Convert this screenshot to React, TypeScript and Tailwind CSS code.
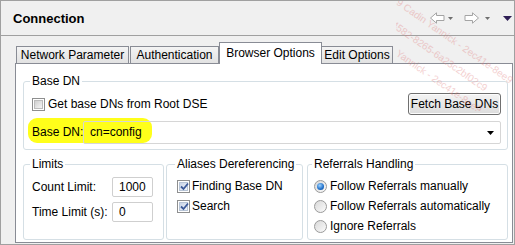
import React from 'react';

const Checkbox: React.FC<{ checked?: boolean }> = ({ checked }) => (
  <span className="relative w-[13px] h-[13px] shrink-0 border border-[#8e8f8f] bg-white p-[1px]">
    <span
      className={
        checked
          ? 'block w-full h-full border border-[#b7c4d6] bg-gradient-to-br from-[#c7d2e6] to-[#f4f6fa]'
          : 'block w-full h-full border border-[#bcbcbc] bg-gradient-to-br from-[#cfcfcf] to-[#f6f6f6]'
      }
    />
    {checked && (
      <svg className="absolute left-[2px] top-[1px]" width="9" height="9" viewBox="0 0 9 9">
        <path d="M1 4.5 L3.5 7 L8 1.5" fill="none" stroke="#3c5a99" strokeWidth="1.8" />
      </svg>
    )}
  </span>
);

const Radio: React.FC<{ checked?: boolean }> = ({ checked }) => (
  <span className="relative w-[13px] h-[13px] shrink-0 rounded-full border border-[#9a9a9a] bg-gradient-to-br from-[#d8d8d8] to-[#fbfbfb] flex items-center justify-center">
    {checked && (
      <span className="w-[7px] h-[7px] rounded-full bg-[radial-gradient(circle_at_40%_35%,#9fd3ff,#1f6fc9_60%,#164a8c)]" />
    )}
  </span>
);

const Group: React.FC<{ title: string; className?: string; children: React.ReactNode }> = ({
  title,
  className,
  children,
}) => (
  <fieldset className={`border border-[#d5dfe5] rounded-[3px] min-w-0 ${className ?? ''}`}>
    <legend className="-ml-[2px] px-[2px] leading-[15px]">{title}</legend>
    {children}
  </fieldset>
);

const Triangle: React.FC<{ color: string; w?: number }> = ({ color, w = 5 }) => (
  <svg width={w} height={w / 2 + 0.5} viewBox={`0 0 ${w} ${w / 2 + 0.5}`}>
    <polygon points={`0,0 ${w},0 ${w / 2},${w / 2 + 0.5}`} fill={color} />
  </svg>
);

const Arrow: React.FC<{ flip?: boolean }> = ({ flip }) => (
  <svg width="15" height="12" viewBox="0 0 15 12" className={flip ? '-scale-x-100' : ''}>
    <polygon
      points="0.5,6 6.5,0.8 6.5,3.5 14,3.5 14,8.5 6.5,8.5 6.5,11.2"
      fill="#ffffff"
      stroke="#a4a4a4"
      strokeWidth="1"
    />
  </svg>
);

const watermark = [
  '9 Cadin Yannick - 2ec41e-8ee9',
  'a-4582-8265-6a23c2bf02c9',
  'Cadin Yannick - 2ec41e-8ee9',
];

export default function App() {
  return (
    <div className="relative w-[515px] h-[245px] overflow-hidden flex flex-col border border-[#a0a0a0] bg-[#f0f0f0] text-[12px] leading-[15px] text-black font-['Liberation_Sans',Arial,sans-serif]">
      <div className="h-[35px] shrink-0 border-b border-[#a0a0a0] flex items-center pl-[12px] pr-[2px]">
        <span className="text-[13px] font-bold">Connection</span>
        <div className="ml-auto flex items-center">
          <Arrow />
          <span className="ml-[3px]"><Triangle color="#6f6f6f" /></span>
          <span className="ml-[11px]"><Arrow flip /></span>
          <span className="ml-[6px]"><Triangle color="#6f6f6f" /></span>
          <span className="ml-[13px]"><Triangle color="#2f1f55" w={9} /></span>
        </div>
      </div>

      <div className="flex-1 flex flex-col pt-[6px]">
        <div className="relative z-10 -mb-px ml-[15px] flex items-end">
          <div className="w-[113px] h-[17px] mb-px border border-b-0 border-[#898c95] bg-gradient-to-b from-[#f4f4f4] to-[#e2e2e2] flex items-center justify-center pt-[1px]">
            Network Parameter
          </div>
          <div className="ml-[1px] w-[89px] h-[17px] mb-px border border-b-0 border-[#898c95] bg-gradient-to-b from-[#f4f4f4] to-[#e2e2e2] flex items-center justify-center pt-[1px]">
            Authentication
          </div>
          <div className="w-[103px] h-[22px] border border-b-0 border-[#898c95] bg-white flex items-start justify-center pt-[3px]">
            Browser Options
          </div>
          <div className="w-[71px] h-[17px] mb-px border border-b-0 border-l-0 border-[#898c95] bg-gradient-to-b from-[#f4f4f4] to-[#e2e2e2] flex items-center justify-center pt-[1px]">
            Edit Options
          </div>
        </div>

        <div className="flex-1 ml-[14px] mr-[1px] mb-[1px] bg-white border border-[#898c95] pl-[7px] pr-[4px] pt-[10px] pb-[2px] flex flex-col">
          <Group title="Base DN" className="pl-[8px] pr-[6px] pt-[4px] pb-[5px]">
            <div className="h-[22px] flex items-center">
              <Checkbox />
              <span className="ml-[3px]">Get base DNs from Root DSE</span>
              <button className="ml-auto w-[93px] h-[22px] rounded-[3px] border border-[#707070] bg-gradient-to-b from-[#f4f4f4] to-[#dcdcdc] shadow-[inset_0_0_0_1px_#fcfcfc] whitespace-nowrap">
                Fetch Base DNs
              </button>
            </div>
            <div className="relative mt-[6px] h-[23px] flex items-center">
              <span className="absolute -left-[4px] -top-[3px] w-[124px] h-[25px] rounded-[9px] bg-[#ffff1a]" />
              <span className="relative w-[51px] shrink-0 whitespace-nowrap">Base DN:</span>
              <div className="relative flex-1 h-full rounded-[2px] border border-[#d6d6d6] flex items-center pl-[6px] pr-[6px]">
                <span className="relative">cn=config</span>
                <span className="ml-auto">
                  <Triangle color="#000000" w={7} />
                </span>
              </div>
            </div>
          </Group>

          <div className="mt-[7px] flex-1 flex">
            <Group title="Limits" className="w-[141px] pl-[8px] pt-[5px]">
              <div className="flex flex-col gap-[5px]">
                <div className="flex items-center">
                  <span className="w-[80px] shrink-0 whitespace-nowrap">Count Limit:</span>
                  <span className="w-[41px] h-[20px] rounded-[2px] border border-[#cfcfcf] pl-[6px] flex items-center">1000</span>
                </div>
                <div className="flex items-center">
                  <span className="w-[80px] shrink-0 whitespace-nowrap">Time Limit (s):</span>
                  <span className="w-[41px] h-[20px] rounded-[2px] border border-[#cfcfcf] pl-[6px] flex items-center">0</span>
                </div>
              </div>
            </Group>

            <Group title="Aliases Dereferencing" className="ml-[2px] w-[137px] pl-[10px] pt-[4px]">
              <div className="h-[20px] flex items-center">
                <Checkbox checked />
                <span className="ml-[2px]">Finding Base DN</span>
              </div>
              <div className="h-[20px] flex items-center">
                <Checkbox checked />
                <span className="ml-[2px]">Search</span>
              </div>
            </Group>

            <Group title="Referrals Handling" className="ml-[4px] flex-1 pl-[6px] pt-[4px]">
              <div className="h-[20px] flex items-center">
                <Radio checked />
                <span className="ml-[3px]">Follow Referrals manually</span>
              </div>
              <div className="h-[20.5px] flex items-center">
                <Radio />
                <span className="ml-[3px]">Follow Referrals automatically</span>
              </div>
              <div className="h-[20.5px] flex items-center">
                <Radio />
                <span className="ml-[3px]">Ignore Referrals</span>
              </div>
            </Group>
          </div>
        </div>
      </div>

      <div className="pointer-events-none absolute left-[395px] top-0 w-[120px] h-[110px] overflow-hidden">
        <div className="absolute left-[6px] -top-[6px] rotate-[35deg] origin-top-left flex flex-col gap-[6px] text-[10px] text-[#e07a7a] opacity-35 whitespace-nowrap">
          {watermark.map((line, i) => (
            <span key={i}>{line}</span>
          ))}
        </div>
      </div>
    </div>
  );
}
